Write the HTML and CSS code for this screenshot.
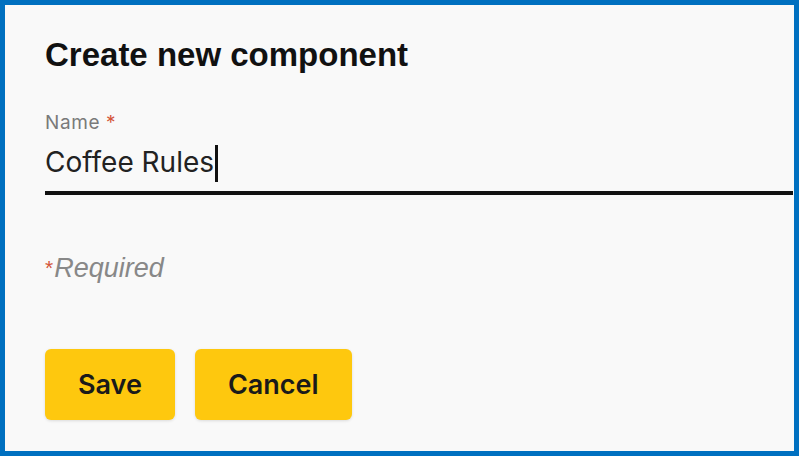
FILE: index.html
```html
<html>
<head>
    <link rel="stylesheet" href="styles.css">
</head>
<body>
    <div class="frame">
        <h1 class="title">Create new component</h1>

        <div class="field">
            <label class="field-label">Name <span class="star">*</span></label>
            <div class="field-input">
                <span class="field-value">Coffee Rules</span><span class="caret"></span>
            </div>
        </div>

        <p class="hint"><span class="star">*</span>Required</p>

        <div class="actions">
            <button class="btn">Save</button>
            <button class="btn">Cancel</button>
        </div>
    </div>
</body>
</html>
```

FILE: styles.css
```css
/* Pagina */
html, body {
    margin: 0;
    padding: 0;
}

body {
    background-color: #0070c0;
}

/* Marco azul con el formulario dentro */
.frame {
    box-sizing: border-box;
    width: 799px;
    height: 456px;
    border: 5px solid #0070c0;
    background-color: #f9f9f9;
    padding: 0 1px 0 40px;
    font-family: "Liberation Sans", Arial, sans-serif;
}

.title {
    margin: 0;
    padding-top: 31px;
    font-size: 33px;
    font-weight: bold;
    color: #111;
    line-height: 38px;
}

/* Campo de texto */
.field {
    margin-top: 38px;
}

.field-label {
    display: block;
    font-family: Inter, sans-serif;
    font-size: 19px;
    letter-spacing: 0.6px;
    color: #7a7a7a;
    line-height: 22px;
}

.star {
    color: #d4553a;
}

.field-input {
    display: flex;
    align-items: flex-start;
    padding: 11px 0 9px;
    border-bottom: 4px solid #111;
}

.field-value {
    font-family: Inter, sans-serif;
    font-size: 28px;
    line-height: 34px;
    color: #222;
}

.caret {
    width: 3px;
    height: 37px;
    margin-left: 1px;
    background-color: #111;
}

/* Texto de ayuda */
.hint {
    margin: 57px 0 0 0;
    font-size: 27px;
    font-style: italic;
    color: #888;
    line-height: 32px;
}

.hint .star {
    display: inline-block;
    margin-right: 1px;
    font-style: normal;
    font-size: 21px;
    vertical-align: 2px;
}

/* Botones */
.actions {
    display: flex;
    gap: 20px;
    margin-top: 65px;
}

.btn {
    height: 71px;
    padding: 0 33px;
    border: none;
    border-radius: 6px;
    background-color: #fec80e;
    box-shadow: 0 1px 3px rgba(0, 0, 0, 0.12);
    font-family: Inter, sans-serif;
    font-size: 27px;
    font-weight: 600;
    color: #1a1a1a;
}
```
